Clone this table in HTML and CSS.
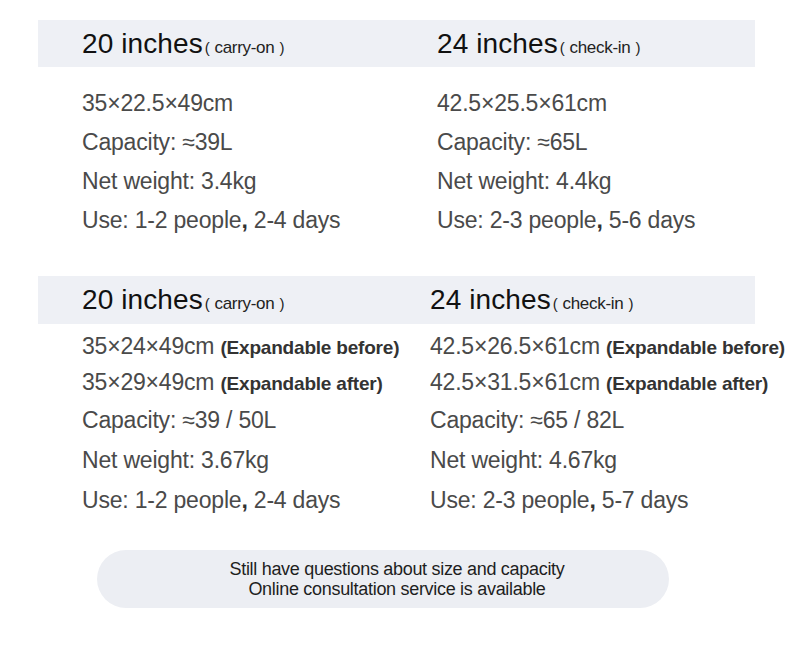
FILE: index.html
```html
<!DOCTYPE html>
<html lang="en">
<head>
<meta charset="utf-8">
<link rel="stylesheet" href="styles.css">
</head>
<body>
<div class="page">
  <section class="spec spec-basic">
    <div class="band">
      <div class="title">20 inches<span class="note"><span class="paren">(</span>carry-on<span class="paren close">)</span></span></div>
      <div class="title">24 inches<span class="note"><span class="paren">(</span>check-in<span class="paren close">)</span></span></div>
    </div>
    <div class="rows">
      <div class="col">
        <div class="row">35×22.5×49cm</div>
        <div class="row">Capacity: ≈39L</div>
        <div class="row">Net weight: 3.4kg</div>
        <div class="row">Use: 1-2 people<b>,</b> 2-4 days</div>
      </div>
      <div class="col">
        <div class="row">42.5×25.5×61cm</div>
        <div class="row">Capacity: ≈65L</div>
        <div class="row">Net weight: 4.4kg</div>
        <div class="row">Use: 2-3 people<b>,</b> 5-6 days</div>
      </div>
    </div>
  </section>

  <section class="spec spec-exp">
    <div class="band">
      <div class="title">20 inches<span class="note"><span class="paren">(</span>carry-on<span class="paren close">)</span></span></div>
      <div class="title">24 inches<span class="note"><span class="paren">(</span>check-in<span class="paren close">)</span></span></div>
    </div>
    <div class="rows">
      <div class="col">
        <div class="row tight">35×24×49cm <b class="tag">(Expandable before)</b></div>
        <div class="row tight">35×29×49cm <b class="tag">(Expandable after)</b></div>
        <div class="row">Capacity: ≈39 / 50L</div>
        <div class="row wide">Net weight: 3.67kg</div>
        <div class="row wide">Use: 1-2 people<b>,</b> 2-4 days</div>
      </div>
      <div class="col">
        <div class="row tight">42.5×26.5×61cm <b class="tag">(Expandable before)</b></div>
        <div class="row tight">42.5×31.5×61cm <b class="tag">(Expandable after)</b></div>
        <div class="row">Capacity: ≈65 / 82L</div>
        <div class="row wide">Net weight: 4.67kg</div>
        <div class="row wide">Use: 2-3 people<b>,</b> 5-7 days</div>
      </div>
    </div>
  </section>

  <div class="consult">
    <p>Still have questions about size and capacity</p>
    <p>Online consultation service is available</p>
  </div>
</div>
</body>
</html>
```

FILE: styles.css
```css
* { box-sizing: border-box; }
html, body {
  margin: 0;
  padding: 0;
  background: #ffffff;
}
body {
  font-family: "Liberation Sans", Arial, sans-serif;
  color: #444;
  width: 790px;
  overflow: hidden;
}
.page {
  padding-top: 20px;
}
.spec {
  width: 717px;
  margin-left: 38px;
}
.band {
  background: #eef0f5;
  height: 47px;
  display: grid;
  padding-left: 44px;
}
.spec-basic .band,
.spec-basic .rows { grid-template-columns: 355px 1fr; }
.spec-exp .band,
.spec-exp .rows { grid-template-columns: 348px 1fr; }
.spec-exp .band { height: 48px; }
.title {
  font-size: 28px;
  line-height: 47px;
  color: #111;
  letter-spacing: 0.1px;
  white-space: nowrap;
}
.note {
  font-size: 17px;
  color: #222;
  margin-left: 2px;
  letter-spacing: -0.3px;
}
.paren {
  font-size: 15px;
  margin-right: 5px;
}
.paren.close {
  margin-right: 0;
  margin-left: 5px;
}
.rows {
  display: grid;
  padding-left: 44px;
}
.spec-basic .rows { padding-top: 17px; }
.spec-exp .rows { padding-top: 5px; }
.row {
  font-size: 23px;
  line-height: 39px;
  letter-spacing: -0.2px;
  white-space: nowrap;
  color: #4a4a4a;
}
.row.tight { line-height: 35px; }
.row.wide { line-height: 40px; }
.row b { color: #333; }
.tag {
  font-size: 19px;
  letter-spacing: -0.2px;
  color: #2a2a2a;
}
.spec-exp { margin-top: 36px; }
.consult {
  margin: 30px 0 0 97px;
  width: 572px;
  height: 58px;
  border-radius: 29px;
  background: #eceef3;
  padding-left: 28px;
  display: flex;
  flex-direction: column;
  justify-content: center;
  align-items: center;
  font-size: 18px;
  line-height: 20px;
  letter-spacing: -0.3px;
  color: #1e1e1e;
}
.consult p { margin: 0; }
```
